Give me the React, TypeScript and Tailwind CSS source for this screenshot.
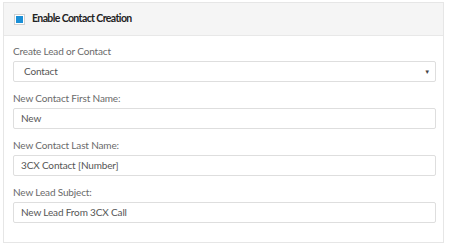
import React from "react";

const Field = ({ label, value, select }: { label: string; value: string; select?: boolean }) => (
  <div className="flex flex-col">
    <div className="text-[10px] leading-[14px] h-[14px] text-[#6a6a6a] tracking-[-0.15px]">{label}</div>
    <div
      className={`mt-[3px] h-[21px] border border-[#dedede] rounded-[2px] bg-white flex items-center pr-[5px] text-[10px] text-[#555] tracking-[-0.15px] ${
        select ? "pl-[10px]" : "pl-[7px]"
      }`}
    >
      <span className="flex-1">{value}</span>
      {select && <span className="text-[6px] text-[#444] leading-none">▼</span>}
    </div>
  </div>
);

export default function App() {
  return (
    <div className="w-[450px] h-[248px] bg-white pt-[2px] pl-[3px]" style={{ fontFamily: "Lato, 'Noto Sans', sans-serif" }}>
      <div className="w-[441px] h-[241px] border border-[#e6e6e6] flex flex-col">
        <div className="h-[33px] bg-[#f5f5f5] border-b border-[#e8e8e8] flex items-center pl-[10px] gap-[7px]">
          <div className="w-[11px] h-[11px] border border-[#d0d0d0] bg-white flex items-center justify-center">
            <div className="w-[7px] h-[7px] bg-[#1a8fd6]" />
          </div>
          <span className="text-[10.5px] font-bold text-[#222] tracking-[-0.6px]">Enable Contact Creation</span>
        </div>
        <div className="flex flex-col gap-[9px] pl-[9px] pr-[7px] pt-[8px]">
          <Field label="Create Lead or Contact" value="Contact" select />
          <Field label="New Contact First Name:" value="New" />
          <Field label="New Contact Last Name:" value="3CX Contact [Number]" />
          <Field label="New Lead Subject:" value="New Lead From 3CX Call" />
        </div>
      </div>
    </div>
  );
}
